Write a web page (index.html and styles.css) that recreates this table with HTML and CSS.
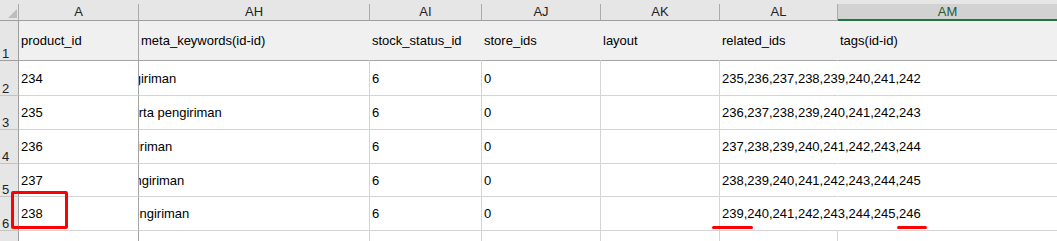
FILE: index.html
```html
<!DOCTYPE html>
<html lang="id">
<head>
<meta charset="utf-8">
<title>Sheet</title>
<link rel="stylesheet" href="styles.css">
</head>
<body>
<div class="sheet">
  <div class="topstrip"></div>
  <div class="grid">
    <!-- column headers -->
    <div class="hd corner"><svg width="9" height="9" viewBox="0 0 9 9"><polygon points="9,0 9,9 0,9" fill="#bdbdbd"/></svg></div>
    <div class="hd">A</div>
    <div class="hd">AH</div>
    <div class="hd">AI</div>
    <div class="hd">AJ</div>
    <div class="hd">AK</div>
    <div class="hd">AL</div>
    <div class="hd sel">AM</div>

    <!-- row 1 -->
    <div class="rh r1h">1</div>
    <div class="c r1 fa">product_id</div>
    <div class="c r1">meta_keywords(id-id)</div>
    <div class="c r1">stock_status_id</div>
    <div class="c r1">store_ids</div>
    <div class="c r1">layout</div>
    <div class="c r1">related_ids</div>
    <div class="c r1 am">tags(id-id)</div>

    <!-- row 2 -->
    <div class="rh">2</div>
    <div class="c fa">234</div>
    <div class="c clip"><span class="cut o2">pengiriman</span></div>
    <div class="c">6</div>
    <div class="c">0</div>
    <div class="c"></div>
    <div class="c al">235,236,237,238,239,240,241,242</div>
    <div class="c am"></div>

    <!-- row 3 -->
    <div class="rh">3</div>
    <div class="c fa">235</div>
    <div class="c clip"><span class="cut o3">serta pengiriman</span></div>
    <div class="c">6</div>
    <div class="c">0</div>
    <div class="c"></div>
    <div class="c al">236,237,238,239,240,241,242,243</div>
    <div class="c am"></div>

    <!-- row 4 -->
    <div class="rh">4</div>
    <div class="c fa">236</div>
    <div class="c clip"><span class="cut o4">pengiriman</span></div>
    <div class="c">6</div>
    <div class="c">0</div>
    <div class="c"></div>
    <div class="c al">237,238,239,240,241,242,243,244</div>
    <div class="c am"></div>

    <!-- row 5 -->
    <div class="rh">5</div>
    <div class="c fa">237</div>
    <div class="c clip"><span class="cut o5">pengiriman</span></div>
    <div class="c">6</div>
    <div class="c">0</div>
    <div class="c"></div>
    <div class="c al">238,239,240,241,242,243,244,245</div>
    <div class="c am"></div>

    <!-- row 6 -->
    <div class="rh">6</div>
    <div class="c fa">238</div>
    <div class="c clip"><span class="cut o6">pengiriman</span></div>
    <div class="c">6</div>
    <div class="c">0</div>
    <div class="c"></div>
    <div class="c al">239,240,241,242,243,244,245,246</div>
    <div class="c am"></div>

    <!-- row 7 (partial) -->
    <div class="rh last"></div>
    <div class="c fa last"></div>
    <div class="c last"></div>
    <div class="c last"></div>
    <div class="c last"></div>
    <div class="c last"></div>
    <div class="c last"></div>
    <div class="c am last"></div>
  </div>

  <div class="mark mark-box"></div>
  <div class="mark mark-line line-a"></div>
  <div class="mark mark-line line-b"></div>
</div>
</body>
</html>
```

FILE: styles.css
```css
html, body {
  margin: 0;
  padding: 0;
  background: #ffffff;
}

body {
  font-family: "Liberation Sans", Arial, sans-serif;
  font-size: 13px;
  color: #000;
  overflow: hidden;
}

.sheet {
  position: relative;
  width: 1057px;
  height: 241px;
  overflow: hidden;
  background: #ffffff;
}

.topstrip {
  height: 4px;
  background: #e6e6e6;
}

.grid {
  display: grid;
  grid-template-columns: 19px 120px 231px 112px 119px 119px 118px 1fr;
  grid-template-rows: 17px 40px 35px 34px 34px 33px 34px 20px;
}

/* column headers */
.hd {
  background: #e6e6e6;
  border-right: 1px solid #ababab;
  border-bottom: 1px solid #9e9e9e;
  line-height: 16px;
  text-align: center;
  color: #222;
  white-space: nowrap;
}

.hd.corner {
  display: flex;
  justify-content: flex-end;
  align-items: flex-end;
  padding: 0 1px 2px 0;
  box-sizing: border-box;
}

.hd.sel {
  background: #d2d2d2;
  border-right: none;
  border-bottom: 2px solid #217346;
  line-height: 15px;
  color: #1d5a36;
}

/* row headers */
.rh {
  background: #e6e6e6;
  border-right: 1px solid #9e9e9e;
  border-bottom: 1px solid #c4c4c4;
  display: flex;
  align-items: flex-end;
  padding-left: 2px;
  line-height: 13px;
  color: #222;
}

.rh.r1h {
  border-bottom-color: #9e9e9e;
}

/* cells */
.c {
  display: flex;
  align-items: center;
  padding-left: 2px;
  white-space: nowrap;
  border-right: 1px solid #d4d4d4;
  border-bottom: 1px solid #d4d4d4;
  min-width: 0;
}

/* filled header row hides gridlines, except the freeze line */
.c.r1 {
  background: #f0f0f0;
  border-right-color: #f0f0f0;
  border-bottom-color: #a5a5a5;
}

.c.fa,
.c.r1.fa {
  border-right-color: #a5a5a5;
}

.c.al {
  border-right-color: transparent;
}

.c.r1.am,
.c.am {
  border-right: none;
}

.c.last {
  border-bottom: none;
}

.clip {
  overflow: hidden;
  padding-left: 0;
}

.cut {
  flex-shrink: 0;
}

.o2 { margin-left: -27px; }
.o3 { margin-left: -14px; }
.o4 { margin-left: -31px; }
.o5 { margin-left: -19px; }
.o6 { margin-left: -14px; }

/* red annotations */
.mark {
  position: absolute;
  pointer-events: none;
}

.mark-box {
  left: 11px;
  top: 191px;
  width: 57px;
  height: 38px;
  border: 3px solid #ff0000;
  border-radius: 2px;
  box-sizing: border-box;
}

.mark-line {
  top: 226px;
  height: 3px;
  background: #ff0000;
  border-radius: 2px;
}

.line-a {
  left: 712px;
  width: 41px;
}

.line-b {
  left: 897px;
  width: 30px;
}
```
